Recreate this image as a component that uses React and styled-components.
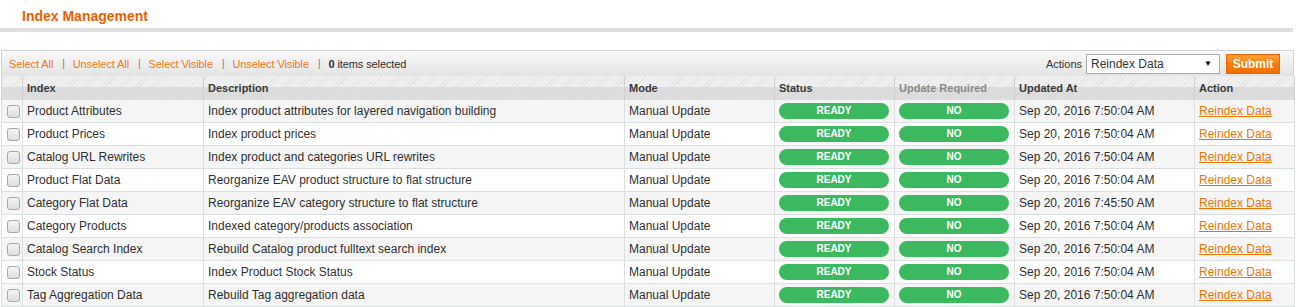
import styled, { createGlobalStyle } from "styled-components";

const GlobalStyle = createGlobalStyle`
  html, body {
    margin: 0;
    padding: 0;
    background: #fff;
  }
  body {
    font-family: "Liberation Sans", Arial, sans-serif;
    font-size: 12px;
    color: #2f2f2f;
  }
`;

const Page = styled.div`
  width: 1297px;
  padding: 0 3px 0 1px;
  box-sizing: border-box;
`;

const ContentHeader = styled.div`
  height: 28px;
  border-bottom: 4px solid #dfdfdf;
  padding-left: 22px;
  margin-right: 1px;
  margin-left: -1px;
`;

const Title = styled.h3`
  margin: 0;
  padding-top: 7px;
  font-size: 14px;
  font-weight: bold;
  color: #eb5e00;
  line-height: 18px;
`;

const Grid = styled.div`
  margin-top: 18px;
`;

const MassBar = styled.div`
  display: flex;
  align-items: center;
  justify-content: space-between;
  height: 25px;
  border: 1px solid #d0d0d0;
  border-bottom: 0;
  background: linear-gradient(#f9f9f9, #e3e3e3);
  padding: 0 13px 0 7px;
  font-size: 11px;
`;

const MassLinks = styled.div`
  display: flex;
  align-items: center;
  letter-spacing: -0.1px;
`;

const MassLink = styled.a`
  color: #ec7a16;
  text-decoration: none;
`;

const Sep = styled.span`
  color: #777;
  margin: 0 8px 0 9px;
  font-size: 10px;
`;

const Count = styled.span`
  color: #2f2f2f;
  strong {
    font-weight: bold;
  }
`;

const Actions = styled.div`
  display: flex;
  align-items: center;
  gap: 4px;
  color: #333;
`;

const Select = styled.div`
  position: relative;
  width: 128px;
  height: 18px;
  border: 1px solid #aaa;
  background: #fff;
  font-size: 12px;
  line-height: 18px;
  padding-left: 4px;
  margin-right: 2px;
  &::after {
    content: "▼";
    position: absolute;
    right: 7px;
    top: 0;
    font-size: 8px;
    color: #000;
  }
`;

const SubmitButton = styled.button`
  height: 20px;
  width: 54px;
  border: 1px solid #ed6502;
  background: linear-gradient(#f9a33b, #f77c0c 50%, #f06e00);
  color: #fff;
  font-family: "Liberation Sans", Arial, sans-serif;
  font-size: 12px;
  font-weight: bold;
  padding: 0;
`;

const Table = styled.table`
  border-collapse: collapse;
  table-layout: fixed;
  width: 1293px;
`;

const HeadCell = styled.th`
  height: 23px;
  padding: 0 4px;
  text-align: left;
  font-size: 11px;
  font-weight: bold;
  color: ${(p) => (p.$muted ? "#8a8a8a" : "#3a3a3a")};
  border: 1px solid #d1d1d1;
  border-top: 0;
  border-bottom: 0;
  background:
    linear-gradient(transparent 50%, rgba(200, 200, 200, 0.45) 50%),
    repeating-linear-gradient(135deg, #f2f2f2 0 2px, #e2e2e2 2px 3px);
`;

const Row = styled.tr`
  background: ${(p) => (p.$odd ? "#f5f5f5" : "#fff")};
`;

const Cell = styled.td`
  height: 22px;
  padding: 0 4px;
  border: 1px solid #dadfe0;
  white-space: nowrap;
  overflow: hidden;
  font-size: 12px;
  color: #2f2f2f;
`;

const CheckCell = styled(Cell)`
  padding: 0 0 0 5px;
`;

const Check = styled.span`
  display: block;
  width: 11px;
  height: 11px;
  border: 1px solid #a8a8a8;
  border-radius: 3px;
  background: linear-gradient(#f4f4f4, #dedede);
`;

const Pill = styled.span`
  display: block;
  height: 16px;
  line-height: 16px;
  border-radius: 8px;
  background: #3cb861;
  color: #fff;
  font-size: 10px;
  font-weight: bold;
  text-align: center;
  margin-right: 1px;
`;

const ActionLink = styled.a`
  color: #ea7601;
  text-decoration: underline;
`;

const rows = [
  ["Product Attributes", "Index product attributes for layered navigation building", "Sep 20, 2016 7:50:04 AM"],
  ["Product Prices", "Index product prices", "Sep 20, 2016 7:50:04 AM"],
  ["Catalog URL Rewrites", "Index product and categories URL rewrites", "Sep 20, 2016 7:50:04 AM"],
  ["Product Flat Data", "Reorganize EAV product structure to flat structure", "Sep 20, 2016 7:50:04 AM"],
  ["Category Flat Data", "Reorganize EAV category structure to flat structure", "Sep 20, 2016 7:45:50 AM"],
  ["Category Products", "Indexed category/products association", "Sep 20, 2016 7:50:04 AM"],
  ["Catalog Search Index", "Rebuild Catalog product fulltext search index", "Sep 20, 2016 7:50:04 AM"],
  ["Stock Status", "Index Product Stock Status", "Sep 20, 2016 7:50:04 AM"],
  ["Tag Aggregation Data", "Rebuild Tag aggregation data", "Sep 20, 2016 7:50:04 AM"],
];

const widths = [21, 181, 421, 150, 120, 120, 180, 100];

export default function App() {
  return (
    <>
      <GlobalStyle />
      <Page>
        <ContentHeader>
          <Title>Index Management</Title>
        </ContentHeader>
        <Grid>
          <MassBar>
            <MassLinks>
              <MassLink>Select All</MassLink>
              <Sep>|</Sep>
              <MassLink>Unselect All</MassLink>
              <Sep>|</Sep>
              <MassLink>Select Visible</MassLink>
              <Sep>|</Sep>
              <MassLink>Unselect Visible</MassLink>
              <Sep>|</Sep>
              <Count>
                <strong>0</strong> items selected
              </Count>
            </MassLinks>
            <Actions>
              Actions
              <Select>Reindex Data</Select>
              <SubmitButton>Submit</SubmitButton>
            </Actions>
          </MassBar>
          <Table>
            <colgroup>
              {widths.map((w, i) => (
                <col key={i} style={{ width: w }} />
              ))}
            </colgroup>
            <thead>
              <tr>
                <HeadCell />
                <HeadCell>Index</HeadCell>
                <HeadCell>Description</HeadCell>
                <HeadCell>Mode</HeadCell>
                <HeadCell>Status</HeadCell>
                <HeadCell $muted>Update Required</HeadCell>
                <HeadCell>Updated At</HeadCell>
                <HeadCell>Action</HeadCell>
              </tr>
            </thead>
            <tbody>
              {rows.map(([name, desc, date], i) => (
                <Row key={name} $odd={i % 2 === 0}>
                  <CheckCell>
                    <Check />
                  </CheckCell>
                  <Cell>{name}</Cell>
                  <Cell>{desc}</Cell>
                  <Cell>Manual Update</Cell>
                  <Cell>
                    <Pill>READY</Pill>
                  </Cell>
                  <Cell>
                    <Pill>NO</Pill>
                  </Cell>
                  <Cell>{date}</Cell>
                  <Cell>
                    <ActionLink>Reindex Data</ActionLink>
                  </Cell>
                </Row>
              ))}
            </tbody>
          </Table>
        </Grid>
      </Page>
    </>
  );
}
